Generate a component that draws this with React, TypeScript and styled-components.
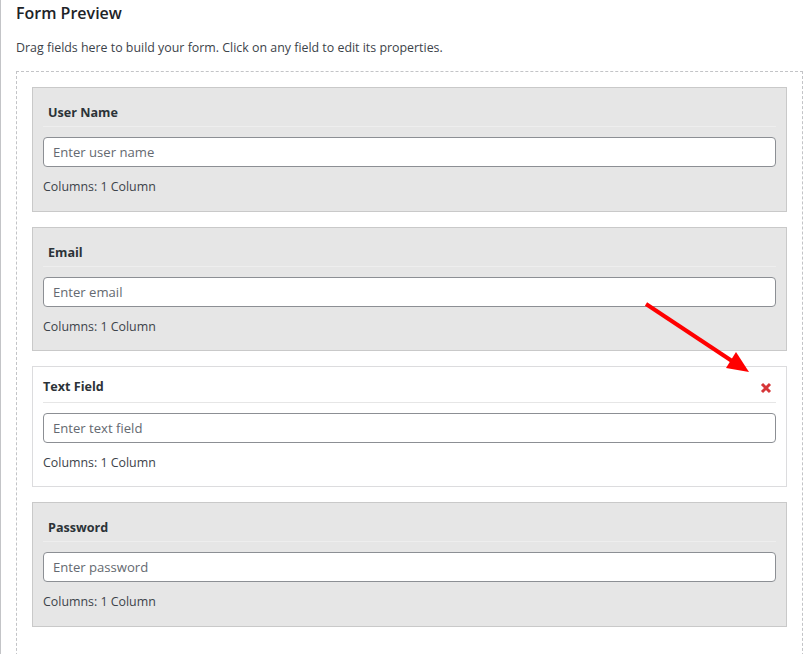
import React from "react";
import styled, { createGlobalStyle, css } from "styled-components";

const GlobalStyle = createGlobalStyle`
  html, body { margin: 0; padding: 0; background: #ffffff; }
  body {
    font-family: "Open Sans", "Noto Sans", sans-serif;
    color: #3c434a;
  }
  * { box-sizing: border-box; }
`;

const Page = styled.div`
  position: relative;
  min-height: 654px;
  border-left: 1px solid #c3c4c7;
  padding: 0 4px 0 15px;
`;

const Title = styled.h2`
  margin: 0;
  font-size: 16px;
  font-weight: 600;
  line-height: 26px;
  color: #1d2327;
`;

const Description = styled.p`
  margin: 12px 0 0;
  font-size: 12.4px;
  line-height: 20px;
  color: #3c434a;
`;

const DropZone = styled.div`
  margin-top: 13px;
  border: 1px dashed #c3c4c7;
  padding: 15px 15px 0;
  display: flex;
  flex-direction: column;
  gap: 15px;
  min-height: 600px;
`;

const Card = styled.div<{ $selected?: boolean }>`
  padding: ${(p) => (p.$selected ? "10px 10px 13px" : "9px 10px 13.5px")};
  border: 1px solid ${(p) => (p.$selected ? "#dcdcde" : "#c9c9c9")};
  background: ${(p) => (p.$selected ? "#ffffff" : "#e6e6e6")};
`;

const Header = styled.div<{ $selected?: boolean }>`
  display: flex;
  align-items: center;
  justify-content: space-between;
  ${(p) =>
    p.$selected
      ? css`
          padding: 0 0 5px 0;
          border-bottom: 1px solid #e6e6e6;
        `
      : css`
          padding: 6px 0 3px 5px;
          border-bottom: 1px solid #eeeeee;
        `}
`;

const Label = styled.span`
  font-size: 12.6px;
  font-weight: 700;
  line-height: 20px;
  color: #2c3338;
`;

const Remove = styled.button`
  border: 0;
  background: none;
  padding: 0;
  margin: 1px 4px 0 0;
  width: 12px;
  height: 12px;
  display: flex;
  align-items: center;
  justify-content: center;
  cursor: pointer;
`;

const Input = styled.input`
  display: block;
  width: 100%;
  height: 30px;
  margin-top: 10px;
  padding: 0 9px;
  border: 1px solid #8c8f94;
  border-radius: 4px;
  background: #ffffff;
  font-family: inherit;
  font-size: 13.1px;
  color: #2c3338;
  &::placeholder { color: #646970; }
`;

const Columns = styled.div`
  margin-top: 10px;
  font-size: 12.4px;
  line-height: 20px;
  color: #3c434a;
`;

const Arrow = styled.svg`
  position: absolute;
  left: 0;
  top: 0;
  pointer-events: none;
`;

const fields = [
  { label: "User Name", placeholder: "Enter user name" },
  { label: "Email", placeholder: "Enter email" },
  { label: "Text Field", placeholder: "Enter text field", selected: true },
  { label: "Password", placeholder: "Enter password" },
];

export default function App() {
  return (
    <>
      <GlobalStyle />
      <Page>
        <Title>Form Preview</Title>
        <Description>
          Drag fields here to build your form. Click on any field to edit its properties.
        </Description>
        <DropZone>
          {fields.map((f) => (
            <Card key={f.label} $selected={f.selected}>
              <Header $selected={f.selected}>
                <Label>{f.label}</Label>
                {f.selected && (
                  <Remove aria-label="Remove field">
                    <svg width="12" height="12" viewBox="0 0 12 12">
                      <path
                        d="M2 2 L10 10 M10 2 L2 10"
                        stroke="#d63638"
                        strokeWidth="3"
                        strokeLinecap="butt"
                      />
                    </svg>
                  </Remove>
                )}
              </Header>
              <Input type="text" placeholder={f.placeholder} />
              <Columns>Columns: 1 Column</Columns>
            </Card>
          ))}
        </DropZone>
        <Arrow width="807" height="654" viewBox="0 0 807 654">
          <line x1="645" y1="304" x2="731" y2="361" stroke="#ff0000" strokeWidth="4" />
          <polygon points="748,372 725,368 735,352" fill="#ff0000" />
        </Arrow>
      </Page>
    </>
  );
}
